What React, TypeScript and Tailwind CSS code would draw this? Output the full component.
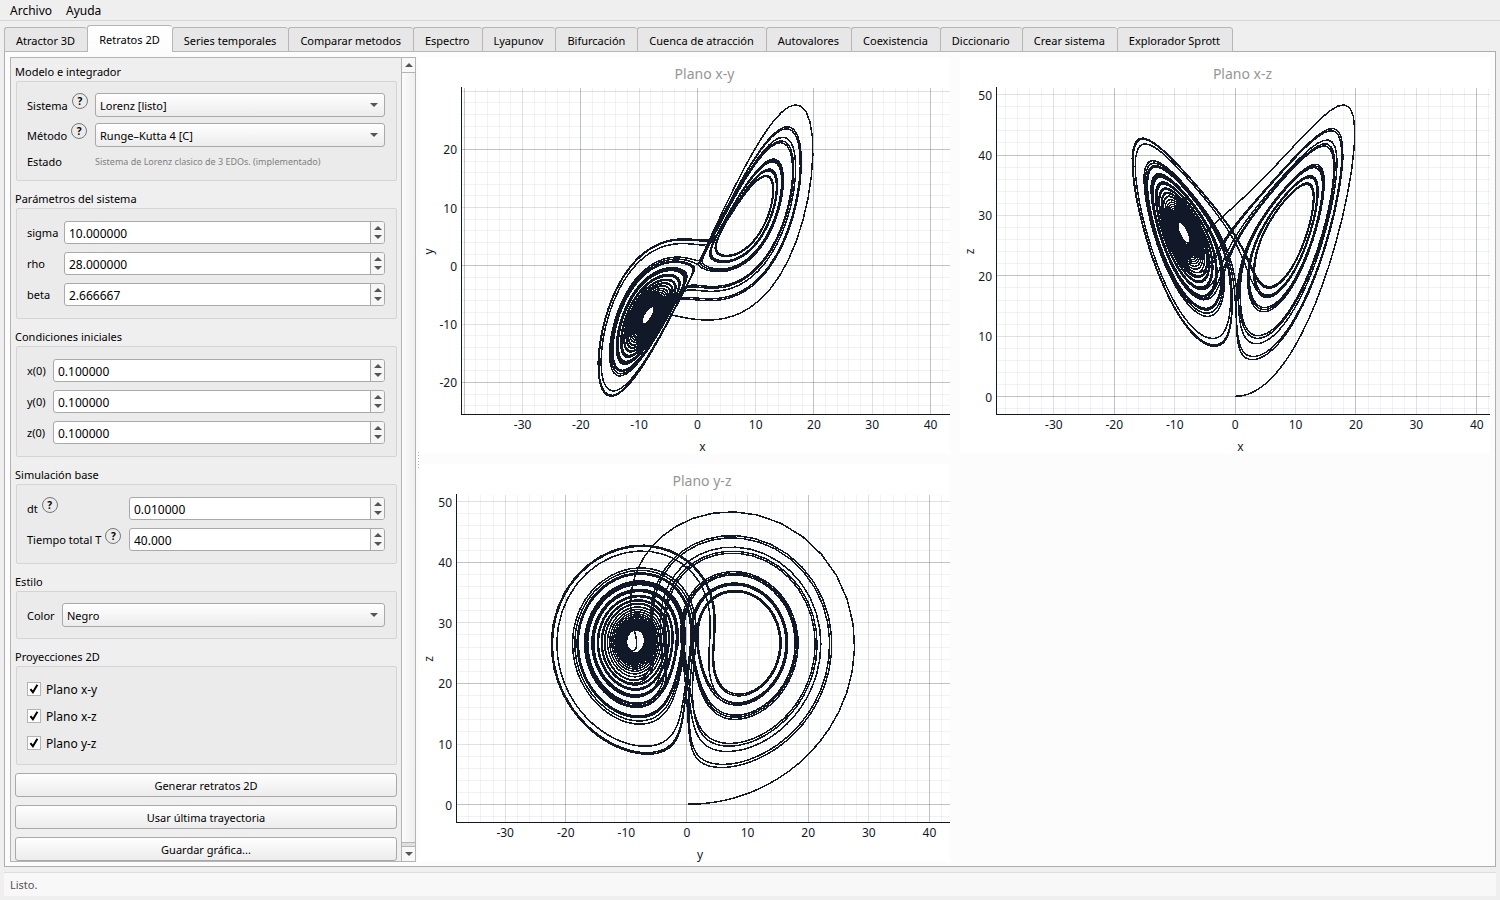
import React, { useLayoutEffect, useMemo, useRef, useState } from 'react';

type Point = [number, number, number];

interface PlotProps {
  title: string;
  points: Point[];
  h: 0 | 1 | 2;
  v: 0 | 1 | 2;
  axisWidth: number;
}

const AXES = ['x', 'y', 'z'];
const TABS = [
  'Atractor 3D',
  'Retratos 2D',
  'Series temporales',
  'Comparar metodos',
  'Espectro',
  'Lyapunov',
  'Bifurcación',
  'Cuenca de atracción',
  'Autovalores',
  'Coexistencia',
  'Diccionario',
  'Crear sistema',
  'Explorador Sprott',
];

const TOP = 30;
const BOTTOM = 40;
const PADDING = 1.122;

// Lorenz system, classic fourth order Runge-Kutta
const integrate = (sigma: number, rho: number, beta: number, start: Point, dt: number, total: number): Point[] => {
  const f = ([x, y, z]: Point): Point => [sigma * (y - x), x * (rho - z) - y, x * y - beta * z];
  const add = (a: Point, b: Point, s: number): Point => [a[0] + s * b[0], a[1] + s * b[1], a[2] + s * b[2]];
  const steps = Math.min(20000, Math.max(1, Math.round(total / dt) || 1));
  const out: Point[] = [start];
  let p = start;
  for (let i = 0; i < steps; i++) {
    const k1 = f(p);
    const k2 = f(add(p, k1, dt / 2));
    const k3 = f(add(p, k2, dt / 2));
    const k4 = f(add(p, k3, dt));
    p = [
      p[0] + (dt / 6) * (k1[0] + 2 * k2[0] + 2 * k3[0] + k4[0]),
      p[1] + (dt / 6) * (k1[1] + 2 * k2[1] + 2 * k3[1] + k4[1]),
      p[2] + (dt / 6) * (k1[2] + 2 * k2[2] + 2 * k3[2] + k4[2]),
    ];
    if (!p.every(Number.isFinite)) break;
    out.push(p);
  }
  return out;
};

const multiples = (from: number, to: number, step: number) => {
  const out: number[] = [];
  for (let n = Math.ceil(from / step); n * step <= to; n++) out.push(n * step);
  return out;
};

const gridOpacity = (value: number) => (value % 20 === 0 ? 0.26 : value % 10 === 0 ? 0.13 : 0.055);

const Plot: React.FC<PlotProps> = ({ title, points, h, v, axisWidth }) => {
  const ref = useRef<HTMLDivElement>(null);
  const [size, setSize] = useState({ w: 531, h: 397 });

  useLayoutEffect(() => {
    const el = ref.current;
    if (!el) return;
    const measure = () => setSize({ w: el.clientWidth, h: el.clientHeight });
    measure();
    const observer = new ResizeObserver(measure);
    observer.observe(el);
    return () => observer.disconnect();
  }, []);

  const left = axisWidth;
  const right = size.w;
  const bottom = size.h - BOTTOM;
  const midX = (left + right) / 2;
  const midY = (TOP + bottom) / 2;

  const hs = points.map(p => p[h]);
  const vs = points.map(p => p[v]);
  const [hMin, hMax, vMin, vMax] = [Math.min(...hs), Math.max(...hs), Math.min(...vs), Math.max(...vs)];
  // same scale on both axes
  const scale = Math.min((bottom - TOP) / (vMax - vMin), (right - left) / (hMax - hMin)) / PADDING;
  const toX = (value: number) => midX + (value - (hMin + hMax) / 2) * scale;
  const toY = (value: number) => midY - (value - (vMin + vMax) / 2) * scale;
  const fromX = (px: number) => (px - midX) / scale + (hMin + hMax) / 2;
  const fromY = (px: number) => (midY - px) / scale + (vMin + vMax) / 2;

  const gridX = multiples(fromX(left + 1), fromX(right), 2);
  const gridY = multiples(fromY(bottom - 1), fromY(TOP), 2);
  const labelsX = gridX.filter(n => n % 10 === 0 && toX(n) - 11 > left && toX(n) + 11 < right);
  const labelsY = gridY.filter(n => n % 10 === 0 && toY(n) - 7 > TOP && toY(n) < bottom);
  const path = points.map(p => `${toX(p[h]).toFixed(2)},${toY(p[v]).toFixed(2)}`).join(' ');

  return (
    <div ref={ref} className="relative min-h-0 min-w-0 overflow-hidden bg-white">
      <svg width={size.w} height={size.h} className="absolute inset-0 block" role="img" aria-label={title}>
        <text x={midX - 1} y={22} textAnchor="middle" className="fill-[#969696] text-[14px]">
          {title}
        </text>
        <g shapeRendering="crispEdges" className="stroke-[#111827]">
          {gridX.map(n => (
            <line key={`x${n}`} x1={Math.floor(toX(n)) + 0.5} x2={Math.floor(toX(n)) + 0.5} y1={TOP + 1} y2={bottom} strokeOpacity={gridOpacity(n)} />
          ))}
          {gridY.map(n => (
            <line key={`y${n}`} x1={left + 1} x2={right} y1={Math.floor(toY(n)) + 0.5} y2={Math.floor(toY(n)) + 0.5} strokeOpacity={gridOpacity(n)} />
          ))}
          <path d={`M${left + 0.5} ${TOP}V${bottom + 0.5}H${right}`} fill="none" />
          <polyline points={path} fill="none" strokeWidth={1.5} />
        </g>
        <g className="fill-[#111827] text-[12px]">
          {labelsX.map(n => (
            <text key={n} x={toX(n)} y={bottom + 15} textAnchor="middle">
              {n}
            </text>
          ))}
          {labelsY.map(n => (
            <text key={n} x={left - 4} y={toY(n) + 5} textAnchor="end">
              {n}
            </text>
          ))}
          <text x={midX - 3} y={bottom + 37} textAnchor="middle">
            {AXES[h]}
          </text>
          <text transform={`translate(14 ${midY + 1}) rotate(-90)`} textAnchor="middle">
            {AXES[v]}
          </text>
        </g>
      </svg>
    </div>
  );
};

const Group: React.FC<{ title: string; className: string; children: React.ReactNode }> = ({ title, className, children }) => (
  <fieldset className="flex flex-col">
    <legend className="h-[18px] leading-[18px]">{title}</legend>
    <div className={`ml-px rounded-[2px] border border-[#d4d4d4] bg-[#ebebeb] pl-[10px] pr-[11px] ${className}`}>{children}</div>
  </fieldset>
);

const FieldLabel: React.FC<{ id: string; text: string; help?: boolean }> = ({ id, text, help }) => (
  <div className="flex items-start gap-1 self-stretch">
    <label htmlFor={id} className="self-center whitespace-nowrap pt-px leading-4">
      {text}
    </label>
    {help && (
      <button
        aria-label={`Ayuda: ${text}`}
        className="flex h-4 w-4 shrink-0 items-center justify-center rounded-full border border-[#777] text-[10px] font-bold leading-none"
      >
        ?
      </button>
    )}
  </div>
);

const Combo: React.FC<{ id: string; options: string[] }> = ({ id, options }) => (
  <div className="relative">
    <select
      id={id}
      className="block h-6 w-full appearance-none rounded-[3px] border border-[#a9a9a9] bg-linear-to-b from-white to-[#ececec] pl-1 pr-6 pt-px leading-[21px]"
    >
      {options.map(option => (
        <option key={option}>{option}</option>
      ))}
    </select>
    <svg className="pointer-events-none absolute right-[7px] top-[10px]" width="8" height="4" viewBox="0 0 8 4">
      <path d="M0 0h8L4 4z" fill="#555" />
    </svg>
  </div>
);

interface SpinProps {
  id: string;
  value: string;
  step: number;
  onChange: (value: string) => void;
}

const Spin: React.FC<SpinProps> = ({ id, value, step, onChange }) => {
  const nudge = (sign: number) => {
    const decimals = value.split('.')[1]?.length ?? 0;
    onChange((Number(value) + sign * step).toFixed(decimals));
  };

  return (
    <div className="flex h-[23px] overflow-hidden rounded-[3px] border border-[#a9a9a9] bg-white">
      <input
        id={id}
        value={value}
        inputMode="decimal"
        onChange={e => onChange(e.target.value)}
        className="h-full w-0 min-w-0 flex-1 bg-transparent pl-1 pt-px text-[12px] outline-none"
      />
      <div className="flex w-[14px] flex-col border-l border-[#a9a9a9] bg-[#f6f6f6] py-px">
        <button aria-label="Aumentar" onClick={() => nudge(1)} className="flex flex-1 items-center justify-center">
          <svg width="8" height="4" viewBox="0 0 8 4">
            <path d="M0 4h8L4 0z" fill="#555" />
          </svg>
        </button>
        <button aria-label="Disminuir" onClick={() => nudge(-1)} className="flex flex-1 items-center justify-center">
          <svg width="8" height="4" viewBox="0 0 8 4">
            <path d="M0 0h8L4 4z" fill="#555" />
          </svg>
        </button>
      </div>
    </div>
  );
};

const Check: React.FC<{ label: string; checked: boolean; onChange: () => void }> = ({ label, checked, onChange }) => (
  <label className="flex h-5 items-center gap-[5px] text-[12px]">
    <span className="relative h-[14px] w-[14px]">
      <input type="checkbox" checked={checked} onChange={onChange} className="block h-[14px] w-[14px] appearance-none border border-[#b4b4b4] bg-white" />
      {checked && (
        <svg className="pointer-events-none absolute inset-0" width="14" height="14" viewBox="0 0 14 14" fill="none">
          <path d="M3.4 7.2 5.9 10.2 10.4 2.8" stroke="#000" strokeWidth="2" />
        </svg>
      )}
    </span>
    <span className="pt-px">{label}</span>
  </label>
);

const PushButton: React.FC<{ children: React.ReactNode }> = ({ children }) => (
  <button className="h-6 w-full shrink-0 rounded-[3px] border border-[#a9a9a9] bg-linear-to-b from-white to-[#ececec] pt-px leading-[21px]">
    {children}
  </button>
);

const App: React.FC = () => {
  const [activeTab, setActiveTab] = useState('Retratos 2D');
  const [values, setValues] = useState<Record<string, string>>({
    sigma: '10.000000',
    rho: '28.000000',
    beta: '2.666667',
    'x(0)': '0.100000',
    'y(0)': '0.100000',
    'z(0)': '0.100000',
    dt: '0.010000',
    T: '40.000',
  });
  const [planes, setPlanes] = useState({ xy: true, xz: true, yz: true });

  const points = useMemo(() => {
    const num = (name: string) => Number(values[name]);
    return integrate(num('sigma'), num('rho'), num('beta'), [num('x(0)'), num('y(0)'), num('z(0)')], num('dt'), num('T'));
  }, [values]);

  const spin = (name: string, step: number) => (
    <Spin id={name} value={values[name]} step={step} onChange={value => setValues(prev => ({ ...prev, [name]: value }))} />
  );

  return (
    <div className="flex h-screen flex-col bg-[#efefef] font-['Noto_Sans',sans-serif] text-[11px] text-black">
      <nav className="flex h-[21px] shrink-0 items-center gap-[14px] border-b border-[#d6d6d6] px-[10px] pt-px text-[12px]">
        <button>Archivo</button>
        <button>Ayuda</button>
      </nav>

      <div role="tablist" className="relative z-10 mx-1 mt-1 -mb-px flex h-[27px] shrink-0 items-end">
        {TABS.map(tab => (
          <button
            key={tab}
            role="tab"
            aria-selected={tab === activeTab}
            onClick={() => setActiveTab(tab)}
            className={`whitespace-nowrap rounded-t-[3px] border-l border-t border-[#b6b6b6] pl-[11px] pr-3 last:border-r ${
              tab === activeTab ? 'h-[27px] bg-linear-to-b from-white to-[#fcfcfc] pt-[2px]' : 'h-[25px] border-b bg-[#e7e7e7] pt-1'
            }`}
          >
            {tab}
          </button>
        ))}
      </div>

      <main className="mx-1 flex min-h-0 flex-1 border border-[#aeaeae] bg-[#fcfcfc] p-[5px] pb-1">
        <section className="flex w-[406px] shrink-0 border border-[#b4b4b4] bg-[#efefef]">
          <div className="flex min-w-0 flex-1 flex-col overflow-y-auto px-1 pt-[5px] [scrollbar-width:none]">
            <div className="flex flex-col gap-[9px]">
              <Group title="Modelo e integrador" className="grid grid-cols-[62px_1fr] gap-[6px] py-[11px]">
                <FieldLabel id="sistema" text="Sistema" help />
                <Combo id="sistema" options={['Lorenz [listo]']} />
                <FieldLabel id="metodo" text="Método" help />
                <Combo id="metodo" options={['Runge–Kutta 4 [C]']} />
                <span className="h-4 pt-px leading-4">Estado</span>
                <span className="h-4 pt-px text-[9px] leading-4 text-[#808080]">Sistema de Lorenz clasico de 3 EDOs. (implementado)</span>
              </Group>

              <Group title="Parámetros del sistema" className="grid grid-cols-[31px_1fr] gap-x-[6px] gap-y-2 py-3">
                {['sigma', 'rho', 'beta'].map(name => (
                  <React.Fragment key={name}>
                    <FieldLabel id={name} text={name} />
                    {spin(name, 0.1)}
                  </React.Fragment>
                ))}
              </Group>

              <Group title="Condiciones iniciales" className="grid grid-cols-[20px_1fr] gap-x-[6px] gap-y-2 py-3">
                {['x(0)', 'y(0)', 'z(0)'].map(name => (
                  <React.Fragment key={name}>
                    <FieldLabel id={name} text={name} />
                    {spin(name, 0.1)}
                  </React.Fragment>
                ))}
              </Group>

              <Group title="Simulación base" className="grid grid-cols-[96px_1fr] gap-x-[6px] gap-y-2 py-3">
                <FieldLabel id="dt" text="dt" help />
                {spin('dt', 0.001)}
                <FieldLabel id="T" text="Tiempo total T" help />
                {spin('T', 1)}
              </Group>

              <Group title="Estilo" className="grid grid-cols-[29px_1fr] gap-[6px] py-[11px]">
                <FieldLabel id="color" text="Color" />
                <Combo id="color" options={['Negro']} />
              </Group>

              <Group title="Proyecciones 2D" className="flex flex-col items-start gap-[7px] pb-[11px] pt-3">
                <Check label="Plano x-y" checked={planes.xy} onChange={() => setPlanes({ ...planes, xy: !planes.xy })} />
                <Check label="Plano x-z" checked={planes.xz} onChange={() => setPlanes({ ...planes, xz: !planes.xz })} />
                <Check label="Plano y-z" checked={planes.yz} onChange={() => setPlanes({ ...planes, yz: !planes.yz })} />
              </Group>
            </div>

            <div className="mt-2 flex flex-col gap-2">
              <PushButton>Generar retratos 2D</PushButton>
              <PushButton>Usar última trayectoria</PushButton>
              <PushButton>Guardar gráfica...</PushButton>
            </div>
          </div>

          <div className="flex w-[14px] shrink-0 flex-col border-l border-[#b4b4b4] bg-[#e0e0e0]">
            <button aria-label="Subir" className="flex h-[15px] items-center justify-center border-b border-[#b4b4b4] bg-[#f8f8f8]">
              <svg width="8" height="4" viewBox="0 0 8 4">
                <path d="M0 4h8L4 0z" fill="#555" />
              </svg>
            </button>
            <div className="mb-[3px] flex-1 border-b border-[#b4b4b4] bg-linear-to-r from-[#fcfcfc] to-[#eee]" />
            <button aria-label="Bajar" className="flex h-[15px] items-center justify-center border-t border-[#b4b4b4] bg-[#f8f8f8]">
              <svg width="8" height="4" viewBox="0 0 8 4">
                <path d="M0 0h8L4 4z" fill="#555" />
              </svg>
            </button>
          </div>
        </section>

        <div className="flex w-[3px] shrink-0 items-center justify-end">
          <div className="h-4 w-px bg-[repeating-linear-gradient(#b4b4b4_0_1px,transparent_1px_3px)]" />
        </div>

        <div className="grid min-w-0 flex-1 grid-cols-2 grid-rows-[397fr_398fr] gap-[10px]">
          {planes.xy && <Plot title="Plano x-y" points={points} h={0} v={1} axisWidth={42} />}
          {planes.xz && <Plot title="Plano x-z" points={points} h={0} v={2} axisWidth={36} />}
          {planes.yz && <Plot title="Plano y-z" points={points} h={1} v={2} axisWidth={37} />}
        </div>
      </main>

      <footer className="mx-1 mb-1 mt-[5px] flex h-6 shrink-0 items-center border-t border-[#dedede] bg-[#f8f8f8] px-[6px] pt-px text-[11px] text-[#555]">
        Listo.
      </footer>
    </div>
  );
};

export default App;
